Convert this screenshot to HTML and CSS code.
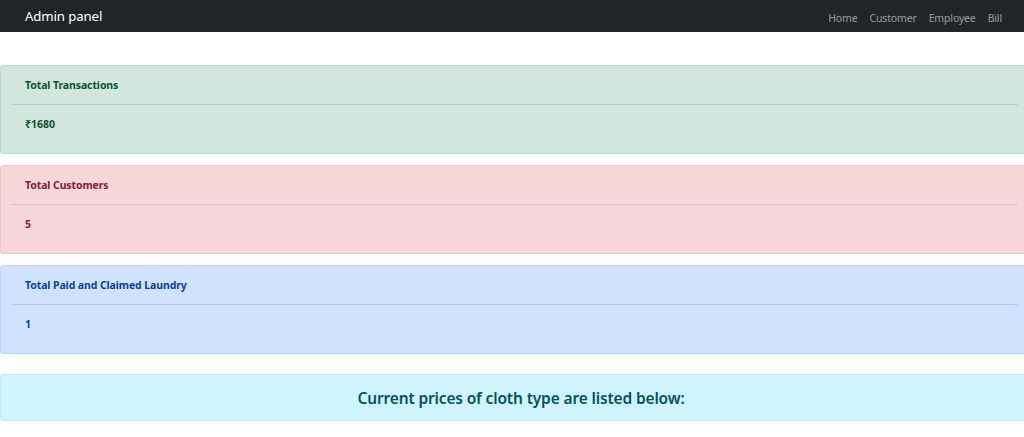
FILE: index.html
```html
<!DOCTYPE html>
<html lang="en">
<head>
<meta charset="utf-8">
<title>Admin panel</title>
<link rel="stylesheet" href="styles.css">
</head>
<body>
<nav class="navbar">
  <a class="brand" href="#">Admin panel</a>
  <ul class="nav-links">
    <li><a href="#">Home</a></li>
    <li><a href="#">Customer</a></li>
    <li><a href="#">Employee</a></li>
    <li><a href="#">Bill</a></li>
  </ul>
</nav>
<main class="content">
  <section class="alert alert-success">
    <h4 class="alert-title">Total Transactions</h4>
    <hr class="divider">
    <p class="alert-value">₹1680</p>
  </section>
  <section class="alert alert-danger">
    <h4 class="alert-title">Total Customers</h4>
    <hr class="divider">
    <p class="alert-value">5</p>
  </section>
  <section class="alert alert-primary">
    <h4 class="alert-title">Total Paid and Claimed Laundry</h4>
    <hr class="divider">
    <p class="alert-value">1</p>
  </section>
  <section class="alert alert-info banner">
    <h3 class="banner-title">Current prices of cloth type are listed below:</h3>
  </section>
</main>
</body>
</html>
```
FILE: styles.css
```css
* { box-sizing: border-box; }
html, body { margin: 0; padding: 0; }
body {
  font-family: "Noto Sans", "Open Sans", "Liberation Sans", sans-serif;
  background: #fff;
  color: #212529;
  overflow-x: hidden;
}
.navbar {
  height: 32px;
  background: #212529;
  display: flex;
  align-items: center;
  justify-content: space-between;
  padding: 0 22px 0 25px;
}
.brand {
  color: #fff;
  text-decoration: none;
  font-size: 13.2px;
  letter-spacing: -0.1px;
}
.nav-links {
  list-style: none;
  margin: 0;
  padding: 0;
  display: flex;
  gap: 12px;
}
.nav-links a {
  color: rgba(255,255,255,.55);
  text-decoration: none;
  font-size: 10.5px;
  letter-spacing: -0.15px;
}
.content {
  padding-top: 33px;
  margin-right: -18px;
  display: flex;
  flex-direction: column;
  gap: 11px;
}
.alert {
  border: 1px solid;
  border-radius: 3px;
  padding: 0 23px 0 10px;
  height: 89px;
  display: flex;
  flex-direction: column;
}
.alert-title {
  margin: 0;
  padding: 11px 14px 0;
  height: 38px;
  font-size: 10.5px;
  line-height: 16px;
  font-weight: 700;
  letter-spacing: -0.1px;
}
.divider {
  margin: 0;
  border: 0;
  border-top: 1px solid currentColor;
  opacity: .25;
}
.alert-value {
  margin: 0;
  padding: 11px 14px 0;
  font-size: 10.5px;
  line-height: 16px;
  font-weight: 700;
}
.alert-success { background: #d1e7dd; border-color: #badbcc; color: #0f5132; }
.alert-danger  { background: #f8d7da; border-color: #f5c2c7; color: #842029; }
.alert-primary { background: #cfe2ff; border-color: #b6d4fe; color: #084298; }
.alert-info    { background: #cff4fc; border-color: #b6effb; color: #055160; }
.content .banner {
  margin-top: 9px;
  height: 47px;
  justify-content: center;
  align-items: center;
  padding: 0;
}
.banner-title {
  margin: 0;
  font-size: 15.5px;
  font-weight: 600;
  letter-spacing: -0.15px;
}
```
